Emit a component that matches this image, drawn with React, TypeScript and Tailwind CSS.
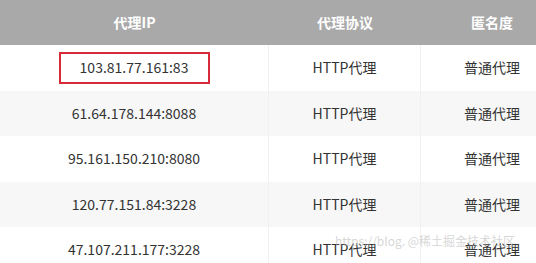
import React from "react";

const rows = [
  { ip: "103.81.77.161:83", proto: "HTTP代理", anon: "普通代理" },
  { ip: "61.64.178.144:8088", proto: "HTTP代理", anon: "普通代理" },
  { ip: "95.161.150.210:8080", proto: "HTTP代理", anon: "普通代理" },
  { ip: "120.77.151.84:3228", proto: "HTTP代理", anon: "普通代理" },
  { ip: "47.107.211.177:3228", proto: "HTTP代理", anon: "普通代理" },
];

export default function App() {
  return (
    <div
      className="relative w-[536px] h-[263px] overflow-hidden bg-white text-[#333]"
      style={{ fontFamily: '"Noto Sans CJK SC", "Noto Sans", sans-serif' }}
    >
      <div className="w-[563px]">
        <div className="grid grid-cols-[269px_152px_142px] h-[45px] bg-[#a9a9a9] text-white font-bold text-[14px]">
          <div className="flex items-center justify-center">代理IP</div>
          <div className="flex items-center justify-center">代理协议</div>
          <div className="flex items-center justify-center">匿名度</div>
        </div>
        {rows.map((r, i) => (
          <div
            key={i}
            className={
              "grid grid-cols-[269px_152px_142px] h-[45.5px] text-[14px] " +
              (i % 2 === 1 ? "bg-[#f7f7f7]" : "bg-white")
            }
          >
            <div className="flex items-center justify-center border-r border-[#f0f0f0]">
              {i === 0 ? (
                <span className="flex items-center justify-center w-[151px] h-[32px] border-2 border-[#d72b3a]">
                  {r.ip}
                </span>
              ) : (
                r.ip
              )}
            </div>
            <div className="flex items-center justify-center border-r border-[#f0f0f0]">
              {r.proto}
            </div>
            <div className="flex items-center justify-center">{r.anon}</div>
          </div>
        ))}
      </div>
      <div className="absolute left-[335px] top-[232px] text-[12px] text-[#bbb]/60 whitespace-nowrap pointer-events-none">
        https://blog. @稀土掘金技术社区
      </div>
    </div>
  );
}
